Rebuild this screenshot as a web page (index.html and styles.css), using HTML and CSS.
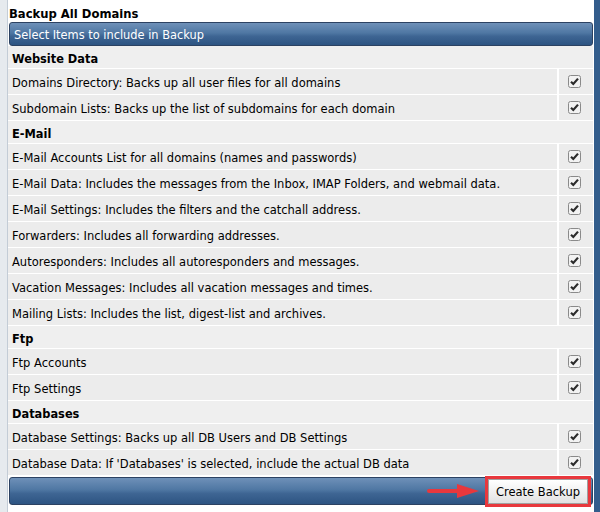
FILE: index.html
```html
<!DOCTYPE html>
<html lang="en">
<head>
    <meta charset="UTF-8">
    <title>Backup All Domains</title>
    <link rel="stylesheet" href="styles.css">
</head>
<body>
    <div class="frame">
        <div class="main">
            <div class="title">Backup All Domains</div>
            <div class="bar">Select Items to include in Backup</div>
            <div class="list" id="list"></div>
            <div class="bar bottom">
                <span class="arrow">
                    <svg width="54" height="16" viewBox="0 0 54 16">
                        <path d="M2 8 L32 8" stroke="#e8383d" stroke-width="4" stroke-linecap="round"/>
                        <path d="M30 1 L52 8 L30 15 Z" fill="#e8383d"/>
                    </svg>
                </span>
                <span class="btn-wrap"><button class="btn">Create Backup</button></span>
            </div>
        </div>
        <div class="side"></div>
    </div>
    <script>
        var groups = [
            ['Website Data', [
                'Domains Directory: Backs up all user files for all domains',
                'Subdomain Lists: Backs up the list of subdomains for each domain'
            ]],
            ['E-Mail', [
                'E-Mail Accounts List for all domains (names and passwords)',
                'E-Mail Data: Includes the messages from the Inbox, IMAP Folders, and webmail data.',
                'E-Mail Settings: Includes the filters and the catchall address.',
                'Forwarders: Includes all forwarding addresses.',
                'Autoresponders: Includes all autoresponders and messages.',
                'Vacation Messages: Includes all vacation messages and times.',
                'Mailing Lists: Includes the list, digest-list and archives.'
            ]],
            ['Ftp', ['Ftp Accounts', 'Ftp Settings']],
            ['Databases', [
                'Database Settings: Backs up all DB Users and DB Settings',
                "Database Data: If 'Databases' is selected, include the actual DB data"
            ]]
        ];
        var check = '<svg width="13" height="13" viewBox="0 0 13 13"><rect x="0.5" y="0.5" width="12" height="12" rx="2" fill="#f2f2f2" stroke="#8a8a8a"/><path d="M3 6.8 L5.3 9 L10 3.6" fill="none" stroke="#2b2b2b" stroke-width="2.2"/></svg>';
        var list = document.getElementById('list');
        var html = '';
        groups.forEach(function (g) {
            html += '<div class="group">' + g[0] + '</div>';
            g[1].forEach(function (item) {
                html += '<div class="row"><div class="label">' + item + '</div><div class="box">' + check + '</div></div>';
            });
        });
        list.innerHTML = html;
    </script>
</body>
</html>
```

FILE: styles.css
```css
body {
    margin: 0;
    background: #ffffff;
    font-family: 'DejaVu Sans', Verdana, sans-serif;
    font-size: 11.5px;
    color: #000;
}
.frame {
    display: flex;
    height: 512px;
    border-left: 7px solid #e6eaee;
}
.main {
    flex: 1;
    border-left: 1px solid #c3ccd6;
    padding-left: 1px;
    padding-right: 1px;
}
.side {
    width: 6px;
    background: #335d8c;
}
.title {
    font-weight: bold;
    font-size: 11.6px;
    height: 22px;
    line-height: 28px;
    background: #fff;
}
.bar {
    height: 22px;
    line-height: 24px;
    border: 1px solid #2c4262;
    border-radius: 3px;
    background: linear-gradient(#6e90b8 0%, #4f77a3 45%, #3e6593 60%, #2d5482 100%);
    color: #fff;
    font-size: 11.4px;
    padding-left: 4px;
}
.list {
    margin-left: -1px;
    background: #fff;
}
.group {
    height: 22px;
    line-height: 26px;
    font-weight: bold;
    font-size: 11.4px;
    padding-left: 4px;
    background: #efefef;
    border-bottom: 1px solid #fff;
}
.row {
    display: flex;
    height: 25px;
    background: #ececec;
    border-bottom: 1px solid #fff;
}
.label {
    flex: 1;
    line-height: 29px;
    padding-left: 4px;
    border-right: 2px solid #fff;
}
.box {
    width: 30px;
    display: flex;
    align-items: center;
    padding-right: 4px;
    justify-content: center;
}
.box svg {
    display: block;
}
.bottom {
    margin-top: 1px;
    height: 26px;
    display: flex;
    justify-content: flex-end;
    align-items: flex-start;
    padding: 0;
}
.arrow svg {
    display: block;
    margin-top: 5px;
    margin-right: 4px;
}
.btn-wrap {
    border: 3px solid #e8383d;
    margin-right: 1px;
    margin-top: -2px;
    position: relative;
}
.btn {
    display: block;
    font-family: 'DejaVu Sans', Verdana, sans-serif;
    font-size: 11.5px;
    color: #000;
    height: 25px;
    padding: 0 7px;
    background: linear-gradient(#ffffff, #e2e2e2);
    border: 1px solid #a0a0a0;
}
```
